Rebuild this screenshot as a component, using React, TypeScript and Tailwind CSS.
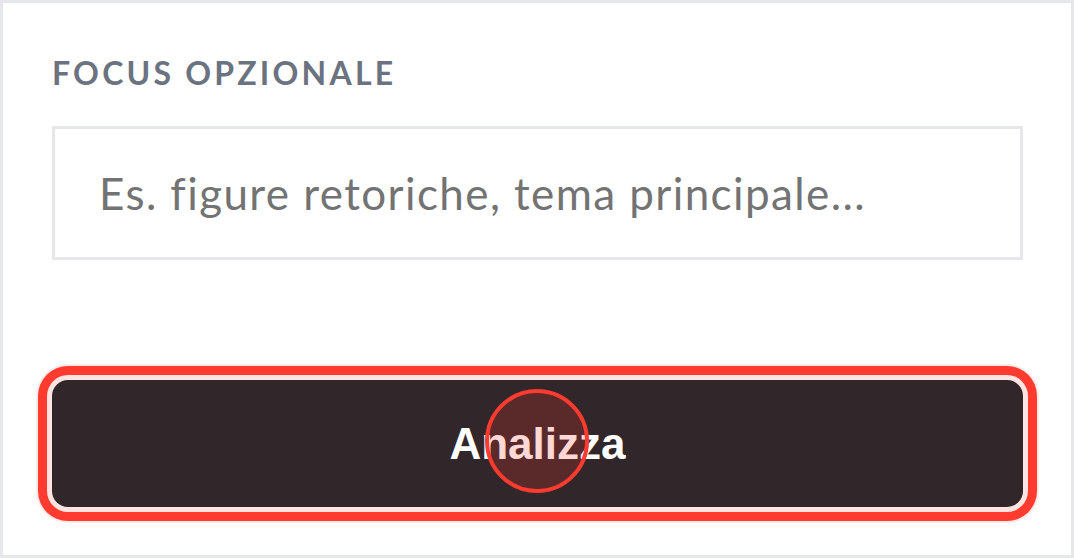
import React from "react";

export default function App() {
  return (
    <div className="h-[558px] w-[1074px] overflow-hidden border-[3px] border-[#e5e7eb] bg-white">
      <div className="flex flex-col pl-[49px] pr-[48px] pt-[54px]">
        <div
          className="text-[32px] font-bold uppercase leading-none tracking-[0.1em] text-[#6b7280]"
          style={{ fontFamily: "Lato, 'Noto Sans', sans-serif" }}
        >
          Focus opzionale
        </div>
        <div className="mt-[37px] flex h-[134px] items-center border-[3px] border-[#e5e7eb] bg-white pl-[44px]">
          <input
            className="w-full bg-transparent text-[44px] font-normal tracking-[1.4px] text-[#737373] outline-none placeholder:text-[#737373]"
            style={{ fontFamily: "Lato, 'Noto Sans', sans-serif" }}
            placeholder="Es. figure retoriche, tema principale..."
          />
        </div>
        <div className="relative mt-[120px]">
          <button
            className="flex h-[127px] w-full items-center justify-center rounded-[16px] bg-[#312629] text-[44px] font-bold text-white shadow-[0_0_0_5px_#ffe4e2,0_0_0_14px_#ff3b30,0_0_0_16px_#fdeae8]"
            style={{ fontFamily: "'Liberation Sans', Arial, sans-serif" }}
          >
            Analizza
          </button>
          <div className="pointer-events-none absolute left-[433px] top-[9px] h-[104px] w-[104px] rounded-full border-[4px] border-[#ff3b30] bg-[rgba(255,59,48,0.2)]" />
        </div>
      </div>
    </div>
  );
}
